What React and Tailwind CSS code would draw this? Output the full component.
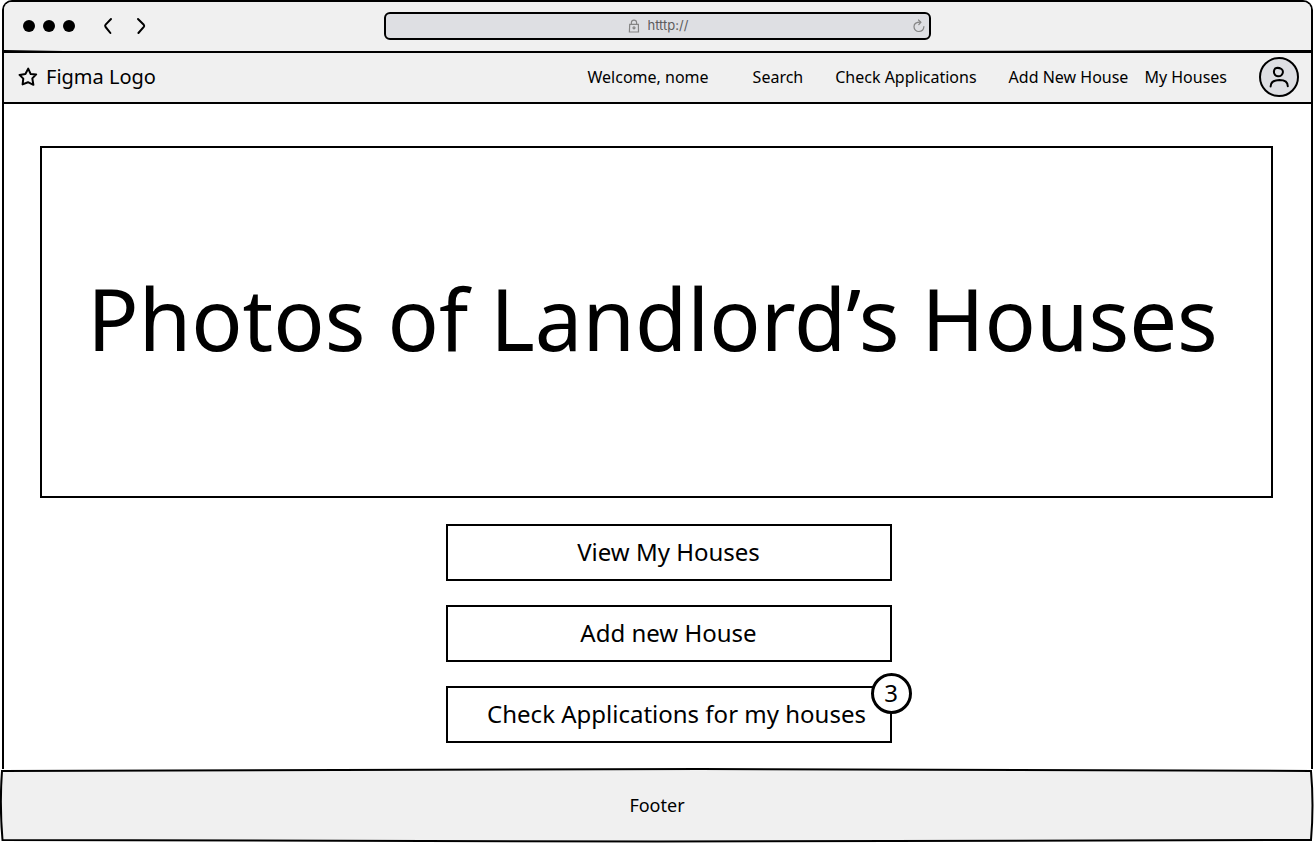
const actions = ["View My Houses", "Add new House"];

function StarIcon() {
  return (
    <svg viewBox="0 0 20 20" className="h-5 w-5" fill="none" stroke="black" strokeWidth="2" strokeLinejoin="round" aria-hidden="true">
      <path d="M10.2 1.6 L12.7 7.1 L18.2 7.4 L14.3 11.4 L15.4 17.8 L10 15.2 L4.6 17.4 L5.3 11.6 L1.5 7.9 L7.4 7 Z" />
    </svg>
  );
}

function LockIcon() {
  return (
    <svg viewBox="0 0 12 14" className="h-[14px] w-3" fill="none" stroke="#858585" strokeWidth="1.2" aria-hidden="true">
      <path d="M1.7 5.4 H10.4 L10.5 13 H1.4 Z" />
      <path d="M3.4 5.4 V3.6 C3.5 0.2 8.5 0.2 8.6 3.6 V5.4" />
      <circle cx="6" cy="8.8" r="1" />
    </svg>
  );
}

function ReloadIcon() {
  return (
    <svg viewBox="0 0 12 14" className="h-[14px] w-3" fill="none" stroke="#858585" strokeWidth="1.2" strokeLinecap="round" aria-hidden="true">
      <path d="M10.9 7.6 C10.6 10.8 8.4 12.5 5.9 12.5 C3 12.5 1 10.3 1 7.7 C1 4.9 3.2 3.2 7.4 3.2" />
      <path d="M5.5 1 L7.9 3.2 L5.8 5.6" />
    </svg>
  );
}

function Header() {
  return (
    <header className="bg-[#f0f0f0]">
      <div className="grid h-12 grid-cols-[1fr_minmax(0,547px)_1fr] items-center">
        <div className="flex items-center pl-[19px]">
          <svg viewBox="0 0 52 12" className="h-3 w-[52px]" aria-hidden="true">
            <circle cx="6" cy="6" r="6" />
            <circle cx="26" cy="6" r="6" />
            <circle cx="46" cy="6" r="6" />
          </svg>
          <button type="button" aria-label="Back" className="ml-7">
            <svg viewBox="0 0 10 18" className="h-[18px] w-[10px]" fill="none" stroke="black" strokeWidth="2" strokeLinecap="round" strokeLinejoin="round">
              <path d="M8 2 L2.6 7.6 Q1.6 8.8 2.6 10 L7.4 16" />
            </svg>
          </button>
          <button type="button" aria-label="Forward" className="ml-[23px]">
            <svg viewBox="0 0 10 18" className="h-[18px] w-[10px]" fill="none" stroke="black" strokeWidth="2" strokeLinecap="round" strokeLinejoin="round">
              <path d="M2 2 L7.8 7.8 Q8.6 8.8 7.8 9.8 L2.4 16" />
            </svg>
          </button>
        </div>
        <div className="grid h-7 grid-cols-[1fr_auto_1fr] items-center rounded-md border-2 border-black bg-[#dedfe3] px-1">
          <span />
          <label className="flex items-center gap-2 pl-1">
            <LockIcon />
            <input
              type="text"
              aria-label="Address"
              defaultValue="htttp://"
              className="w-11 bg-transparent font-['Inter',sans-serif] text-[13px] text-[#5c5c5c] outline-none"
            />
          </label>
          <button type="button" aria-label="Reload" className="justify-self-end">
            <ReloadIcon />
          </button>
        </div>
      </div>
      <svg viewBox="0 0 1307 3" preserveAspectRatio="none" className="block h-[3px] w-full" aria-hidden="true">
        <path d="M0 0 L60 1 H880 L1307 0 V3 H0 Z" />
      </svg>
    </header>
  );
}

function Nav() {
  return (
    <nav className="flex h-[51px] items-center justify-between border-b-2 border-black bg-[#f0f0f0] pr-3 pb-px pl-[14px]">
      <a href="#home" className="flex items-center gap-2 text-xl">
        <StarIcon />
        Figma Logo
      </a>
      <div className="flex items-center gap-8 text-base">
        <span className="mr-3">Welcome, nome</span>
        <a href="#search">Search</a>
        <a href="#applications">Check Applications</a>
        <div className="flex gap-4">
          <a href="#new">Add New House</a>
          <a href="#houses">My Houses</a>
        </div>
        <button type="button" aria-label="Profile">
          <svg viewBox="0 0 40 40" className="h-10 w-10" fill="none" stroke="black" strokeWidth="2" strokeLinecap="round" strokeLinejoin="round">
            <circle cx="20" cy="20" r="19" fill="#dedfe3" />
            <path d="M16.2 11.4 C18 10.6 20.7 11 22.5 12 C24.6 13.4 24.3 16.6 22.4 18.2 C20.4 19.8 17.4 19.6 16 17.8 C14.5 15.8 14.7 13.4 16.2 11.4 Z" />
            <path d="M11.6 29.4 C11.6 25.4 14.6 23.2 20.4 23 C26.2 23 28.8 25.6 28.8 29.2" />
          </svg>
        </button>
      </div>
    </nav>
  );
}

export default function App() {
  return (
    <div className="flex min-h-screen flex-col bg-white font-['Noto_Sans',sans-serif] text-black">
      <div className="mr-px ml-[2px] flex flex-1 flex-col overflow-hidden rounded-t-[10px] border-x-2 border-t-2 border-black">
        <Header />
        <Nav />
        <main className="flex flex-1 flex-col pt-[42px] pr-[38px] pb-[26px] pl-9">
          <section className="flex h-[352px] items-center justify-center border-2 border-black pr-2 pb-2">
            <h1 className="text-center text-[85px] leading-none whitespace-nowrap">Photos of Landlord’s Houses</h1>
          </section>
          <div className="mt-[26px] flex flex-col items-center gap-6 pl-6">
            {actions.map((label) => (
              <button key={label} type="button" className="h-[57px] w-full max-w-[446px] border-2 border-black pb-0.5 text-2xl">
                {label}
              </button>
            ))}
            <button type="button" className="relative h-[57px] w-full max-w-[446px] border-2 border-black pb-0.5 pl-4 text-2xl">
              Check Applications for my houses
              <span className="absolute -top-[15px] -right-[22px] flex h-[41px] w-[41px] items-center justify-center rounded-full border-3 border-black bg-white pb-0.5">
                3
              </span>
            </button>
          </div>
        </main>
      </div>
      <footer className="relative flex h-[74px] items-center justify-center pb-0.5 text-lg">
        <svg viewBox="0 0 1314 74" preserveAspectRatio="none" className="absolute inset-0 h-full w-full overflow-visible" aria-hidden="true">
          <path d="M2 2 Q330 0 700 0 Q1000 0 1311 2 Q1314 36 1311 71 Q1000 72 657 72.5 Q300 72.5 2.5 71 Q-0.5 36 2 2 Z" fill="#f0f0f0" stroke="black" strokeWidth="2" />
        </svg>
        <span className="relative">Footer</span>
      </footer>
    </div>
  );
}
